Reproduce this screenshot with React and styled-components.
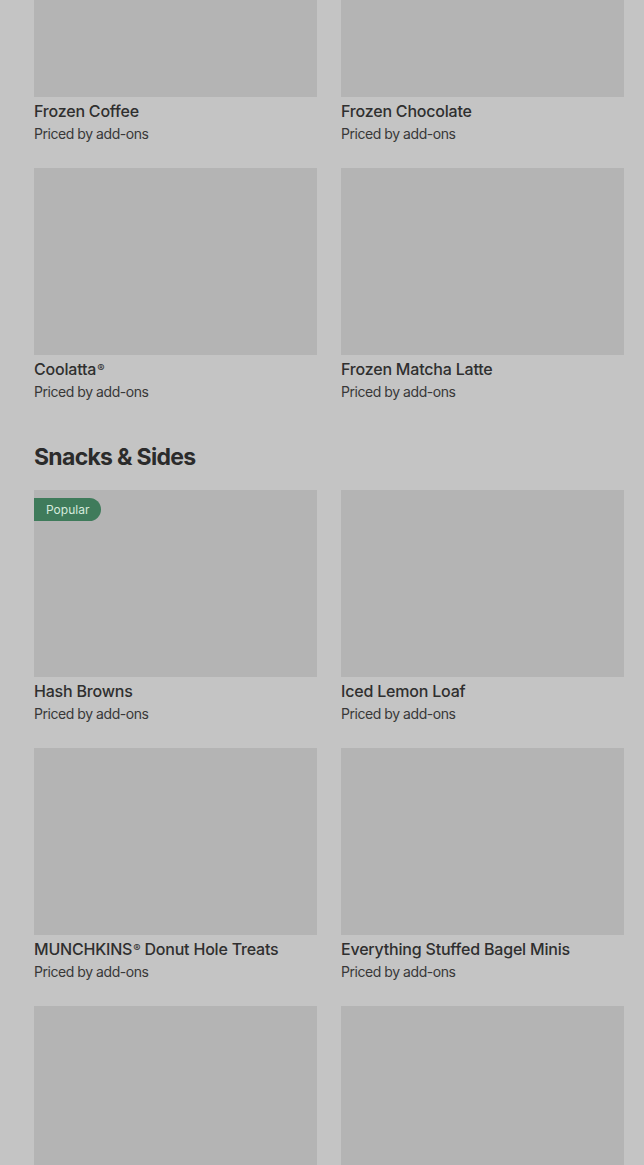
import React from "react"
import styled, { createGlobalStyle } from "styled-components"

const GlobalStyle = createGlobalStyle`
  html, body {
    margin: 0;
    padding: 0;
    background: #c4c4c4;
    font-family: Inter, "Noto Sans", sans-serif;
    color: #2f2f2f;
    overflow: hidden;
  }
`

const Page = styled.main`
  padding: 0 20px 0 34px;
  height: 1165px;
  overflow: hidden;
`

const Section = styled.section`
  margin-top: ${p => (p.$first ? "-90px" : "39px")};
`

const Heading = styled.h2`
  margin: 0 0 17px;
  font-size: 23px;
  line-height: 32px;
  font-weight: 700;
  letter-spacing: -0.7px;
  color: #2b2b2b;
`

const Grid = styled.div`
  display: grid;
  grid-template-columns: 1fr 1fr;
  column-gap: 24px;
  row-gap: 24px;
`

const Card = styled.div`
  display: flex;
  flex-direction: column;
`

const Thumb = styled.div`
  position: relative;
  height: 187px;
  background: #b4b4b4;
`

const Badge = styled.span`
  position: absolute;
  top: 8px;
  left: 0;
  height: 23px;
  padding: 0 12px 0 12px;
  display: flex;
  align-items: center;
  background: #3f7b5b;
  color: #d6eadd;
  font-size: 12px;
  border-radius: 0 12px 12px 0;
`

const Title = styled.div`
  margin-top: 4px;
  font-size: 16px;
  line-height: 20px;
  font-weight: 500;
  color: #2f2f2f;
  letter-spacing: -0.2px;
`

const Reg = styled.span`
  font-size: 11px;
  line-height: 1;
  vertical-align: 3px;
  margin-left: 1px;
`

const Price = styled.div`
  margin-top: 3px;
  font-size: 14px;
  line-height: 20px;
  color: #383838;
  letter-spacing: -0.45px;
`

const drinks = ["Frozen Coffee", "Frozen Chocolate", "Coolatta®", "Frozen Matcha Latte"]

const snacks = [
  { name: "Hash Browns", popular: true },
  { name: "Iced Lemon Loaf" },
  { name: "MUNCHKINS® Donut Hole Treats" },
  { name: "Everything Stuffed Bagel Minis" },
  { name: "" },
  { name: "" },
]

const renderName = name =>
  name.split("®").flatMap((part, i) =>
    i === 0 ? [part] : [<Reg key={i}>®</Reg>, part]
  )

const Item = ({ name, popular }) => (
  <Card>
    <Thumb>{popular && <Badge>Popular</Badge>}</Thumb>
    {name && <Title>{renderName(name)}</Title>}
    {name && <Price>Priced by add-ons</Price>}
  </Card>
)

export default function App() {
  return (
    <Page>
      <GlobalStyle />
      <Section $first>
        <Grid>
          {drinks.map(d => <Item key={d} name={d} />)}
        </Grid>
      </Section>
      <Section>
        <Heading>Snacks &amp; Sides</Heading>
        <Grid>
          {snacks.map((s, i) => <Item key={i} {...s} />)}
        </Grid>
      </Section>
    </Page>
  )
}
